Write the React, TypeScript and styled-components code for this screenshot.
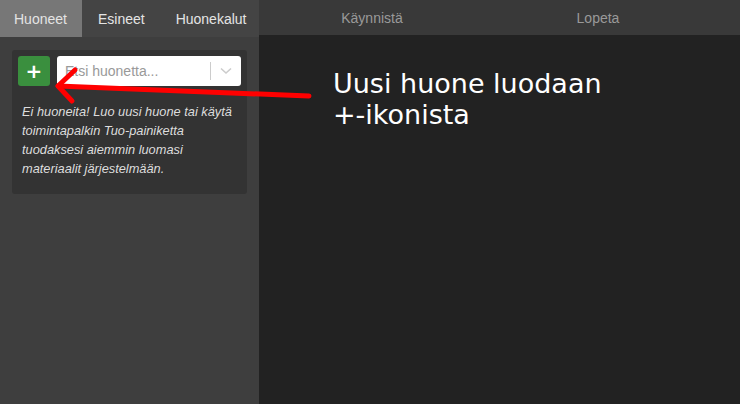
import React from "react";
import styled, { createGlobalStyle } from "styled-components";

const GlobalStyle = createGlobalStyle`
  html, body {
    margin: 0;
    padding: 0;
    background: #222222;
    font-family: "Liberation Sans", Arial, sans-serif;
  }
`;

const Page = styled.div`
  position: relative;
  display: flex;
  width: 740px;
  height: 404px;
  overflow: hidden;
`;

const Sidebar = styled.div`
  width: 259px;
  display: flex;
  flex-direction: column;
  background: #3e3e3e;
`;

const Tabs = styled.div`
  display: flex;
  height: 37px;
  background: #444444;
`;

const Tab = styled.div<{ $active?: boolean }>`
  display: flex;
  align-items: center;
  padding: 0 15px 0 ${(p) => (p.$active ? "14px" : "16px")};
  font-size: 14px;
  color: #e4e4e4;
  background: ${(p) => (p.$active ? "#777777" : "transparent")};
  cursor: pointer;
`;

const Card = styled.div`
  margin: 13px 12px 0 12px;
  padding: 6px 6px 16px 6px;
  background: #333333;
  border-radius: 3px;
`;

const SearchRow = styled.div`
  display: flex;
  gap: 7px;
`;

const AddButton = styled.button`
  width: 32px;
  height: 30px;
  border: none;
  border-radius: 3px;
  background: #3a8f3e;
  color: #ffffff;
  font-family: "DejaVu Sans", sans-serif;
  font-size: 20px;
  font-weight: bold;
  line-height: 30px;
  padding: 0;
  cursor: pointer;
`;

const Select = styled.div`
  flex: 1;
  height: 30px;
  display: flex;
  align-items: center;
  background: #ffffff;
  border-radius: 3px;
`;

const Placeholder = styled.span`
  flex: 1;
  padding-left: 8px;
  font-size: 14px;
  color: #999999;
`;

const Separator = styled.span`
  width: 1px;
  height: 18px;
  background: #cccccc;
`;

const Chevron = styled.span`
  width: 30px;
  display: flex;
  justify-content: center;
  align-items: center;
`;

const EmptyText = styled.p`
  margin: 16px 0 0 4px;
  font-size: 12.8px;
  font-style: italic;
  line-height: 19px;
  color: #dddddd;
`;

const Main = styled.div`
  flex: 1;
  display: flex;
  flex-direction: column;
  background: #222222;
`;

const Toolbar = styled.div`
  display: flex;
  height: 35px;
  background: #393939;
`;

const ToolButton = styled.div`
  width: 226px;
  display: flex;
  align-items: center;
  justify-content: center;
  font-size: 14px;
  color: #999999;
  cursor: pointer;
`;

const Hint = styled.div`
  margin: 33px 0 0 74px;
  font-family: "DejaVu Sans", sans-serif;
  font-size: 27px;
  line-height: 31px;
  color: #ffffff;
`;

const Arrow = styled.svg`
  position: absolute;
  left: 0;
  top: 0;
  pointer-events: none;
`;

export default function App() {
  return (
    <Page>
      <GlobalStyle />
      <Sidebar>
        <Tabs>
          <Tab $active>Huoneet</Tab>
          <Tab>Esineet</Tab>
          <Tab>Huonekalut</Tab>
        </Tabs>
        <Card>
          <SearchRow>
            <AddButton>+</AddButton>
            <Select>
              <Placeholder>Etsi huonetta...</Placeholder>
              <Separator />
              <Chevron>
                <svg width="12" height="8" viewBox="0 0 12 8">
                  <path d="M1 1.5 L6 6 L11 1.5" fill="none" stroke="#cccccc" strokeWidth="1.6" />
                </svg>
              </Chevron>
            </Select>
          </SearchRow>
          <EmptyText>
            Ei huoneita! Luo uusi huone tai käytä toimintapalkin Tuo-painiketta
            tuodaksesi aiemmin luomasi materiaalit järjestelmään.
          </EmptyText>
        </Card>
      </Sidebar>
      <Main>
        <Toolbar>
          <ToolButton>Käynnistä</ToolButton>
          <ToolButton>Lopeta</ToolButton>
        </Toolbar>
        <Hint>
          Uusi huone luodaan
          <br />
          +-ikonista
        </Hint>
      </Main>
      <Arrow width="740" height="404" viewBox="0 0 740 404">
        <g fill="none" stroke="#ff0000" strokeWidth="5" strokeLinecap="round" strokeLinejoin="round">
          <path d="M309 96 L58 86" />
          <path d="M75 70 L58 86 L72 101" />
        </g>
      </Arrow>
    </Page>
  );
}
